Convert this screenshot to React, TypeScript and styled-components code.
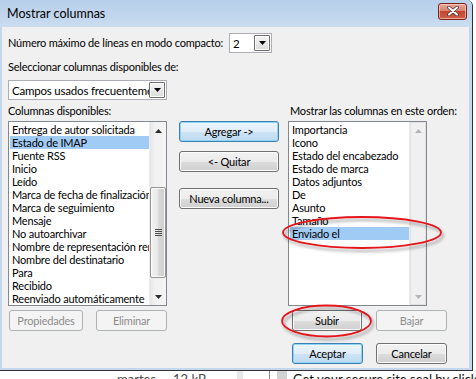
import React from 'react';
import styled, { createGlobalStyle, css } from 'styled-components';

const GlobalStyle = createGlobalStyle`
  html, body { margin: 0; padding: 0; }
  body {
    width: 476px;
    height: 379px;
    overflow: hidden;
    background: #fff;
    font-family: Lato, "Liberation Sans", sans-serif;
    font-size: 11px;
    letter-spacing: -0.2px;
    color: #000;
  }
`;

const Desktop = styled.div`
  position: relative;
  width: 476px;
  height: 379px;
  overflow: hidden;
  background: #fff;
`;

const Window = styled.div`
  width: 473px;
  height: 371px;
  box-sizing: border-box;
  display: flex;
  flex-direction: column;
  background: #c3d7ed;
  border-right: 1px solid #2f3338;
  border-bottom: 1px solid #2f3338;
  border-top-right-radius: 6px;
  padding: 0 3px 2px 2px;
`;

const TitleBar = styled.div`
  height: 27px;
  flex: none;
  margin: 0 -3px 0 -2px;
  padding: 0 5px 0 7px;
  display: flex;
  align-items: center;
  justify-content: space-between;
  background: linear-gradient(#b8d0ea, #c3d7ee 70%, #cbddf0);
  border-top-right-radius: 6px;
`;

const Title = styled.span`
  font-size: 12.5px;
  letter-spacing: 0;
  color: #000;
  margin-top: -1px;
`;

const CloseButton = styled.div`
  width: 29px;
  height: 17px;
  box-sizing: border-box;
  margin-top: -5px;
  border: 1px solid #772419;
  border-radius: 3px;
  display: flex;
  align-items: center;
  justify-content: center;
  background: linear-gradient(#e8a898 0%, #d98270 45%, #c5452f 50%, #d0604a 100%);
  box-shadow: inset 0 0 0 1px rgba(255, 220, 210, 0.6);
`;

const Client = styled.div`
  flex: 1;
  background: #f0f0f0;
  display: flex;
  flex-direction: column;
  padding: 0 21px 0 6px;
`;

const Row = styled.div<{ $top: number }>`
  display: flex;
  align-items: center;
  margin-top: ${p => p.$top}px;
`;

const Label = styled.div<{ $width?: number; $indent?: number }>`
  line-height: 14px;
  height: 14px;
  white-space: nowrap;
  ${p => p.$width && css`width: ${p.$width}px; flex: none;`}
  padding-left: ${p => p.$indent ?? 0}px;
`;

const Combo = styled.div<{ $width: number }>`
  width: ${p => p.$width}px;
  height: 20px;
  box-sizing: border-box;
  flex: none;
  border: 1px solid #acb0b6;
  background: #fff;
  display: flex;
  align-items: center;
  padding: 0 1px 0 3px;
  overflow: hidden;
`;

const ComboValue = styled.span`
  flex: 1;
  white-space: nowrap;
  overflow: hidden;
  font-size: 11.5px;
`;

const ComboArrow = styled.div`
  width: 16px;
  height: 16px;
  box-sizing: border-box;
  flex: none;
  border: 1px solid #6f6f6f;
  border-radius: 1px;
  background: linear-gradient(#f4f4f4, #dcdcdc);
  box-shadow: inset 0 0 0 1px #fbfbfb;
  display: flex;
  align-items: center;
  justify-content: center;
`;

const Columns = styled.div`
  display: grid;
  grid-template-columns: 159px 100px 160px;
  margin-top: 4px;
  & > :nth-child(2) { margin-left: 12px; }
  & > :nth-child(3) { margin-left: 21px; }
`;

const Column = styled.div`
  display: flex;
  flex-direction: column;
`;

const ButtonColumn = styled.div`
  display: flex;
  flex-direction: column;
  padding-top: 17px;
  width: 100px;
`;

const ListBox = styled.div`
  margin-top: 3px;
  height: 185px;
  box-sizing: border-box;
  border: 1px solid #828790;
  background: #fff;
  display: flex;
`;

const Items = styled.div`
  flex: 1;
  min-width: 0;
  padding: 1px 0 0 1px;
  overflow: hidden;
`;

const Item = styled.div<{ $selected?: boolean }>`
  height: 13px;
  line-height: 13px;
  padding-left: 2px;
  white-space: nowrap;
  overflow: hidden;
  background: ${p => (p.$selected ? '#a0cbf5' : 'transparent')};
`;

const ScrollBar = styled.div<{ $disabled?: boolean }>`
  width: 17px;
  flex: none;
  display: flex;
  flex-direction: column;
  box-sizing: border-box;
  border-left: 1px solid #ececec;
  background: ${p =>
    p.$disabled ? '#f0f0f0' : 'linear-gradient(to right, #e6e6e6, #f1f1f1 30%, #f4f4f4)'};
  ${p => p.$disabled && css`box-shadow: inset 0 0 0 1px #e2e2e2;`}
`;

const ScrollArrow = styled.div`
  height: 17px;
  flex: none;
  display: flex;
  align-items: center;
  justify-content: center;
`;

const Track = styled.div`
  flex: 1;
  display: flex;
  flex-direction: column;
`;

const Thumb = styled.div<{ $offset: number; $size: number }>`
  margin: ${p => p.$offset}px 0 0 0;
  height: ${p => p.$size}px;
  box-sizing: border-box;
  border: 1px solid #959595;
  border-radius: 2px;
  background: linear-gradient(to right, #f3f3f3, #e9e9e9 45%, #d9d9d9 55%, #cdcdcd);
  box-shadow: inset 0 0 0 1px #fbfbfb;
  display: flex;
  align-items: center;
  justify-content: center;
`;

const Grip = styled.div`
  width: 7px;
  height: 7px;
  background: repeating-linear-gradient(#4e4e4e 0 1px, transparent 1px 2px);
`;

type Kind = 'normal' | 'default' | 'disabled';

const Button = styled.button<{ $kind?: Kind; $width?: number }>`
  box-sizing: border-box;
  width: ${p => p.$width ?? 100}px;
  height: 21px;
  flex: none;
  margin: 0;
  padding: 0;
  font-family: inherit;
  font-size: 11px;
  letter-spacing: -0.2px;
  color: #000;
  border: 1px solid #707070;
  border-radius: 3px;
  background: linear-gradient(#f2f2f2 0%, #ebebeb 50%, #dddddd 51%, #cfcfcf 100%);
  box-shadow: inset 0 0 0 1px #fcfcfc;
  display: flex;
  align-items: center;
  justify-content: center;
  ${p =>
    p.$kind === 'default' &&
    css`
      border-color: #3c7fb1;
      background: linear-gradient(#ecf5fc 0%, #dfedf9 50%, #cde3f5 51%, #bfdaf1 100%);
      box-shadow: inset 0 0 0 1px #8fd5f7;
    `}
  ${p =>
    p.$kind === 'disabled' &&
    css`
      color: #8d8d8d;
      border-color: #adb2b5;
      background: #f4f4f4;
      box-shadow: none;
    `}
`;

const ButtonRow = styled.div<{ $top: number }>`
  display: flex;
  align-items: center;
  margin-top: ${p => p.$top}px;
  padding-right: 1px;
`;

const Group = styled.div<{ $gap: number; $push?: boolean }>`
  display: flex;
  gap: ${p => p.$gap}px;
  ${p => p.$push && css`margin-left: auto;`}
`;

const Backdrop = styled.div`
  height: 8px;
  display: flex;
  align-items: flex-start;
  overflow: hidden;
  font-family: Lato, sans-serif;
  font-size: 13px;
  letter-spacing: 0;
  line-height: 17px;
`;

const BackCell = styled.div<{ $width: number; $dark?: boolean }>`
  width: ${p => p.$width}px;
  flex: none;
  white-space: nowrap;
  color: ${p => (p.$dark ? '#111' : '#4a4a4a')};
`;

const BackBlock = styled.div<{ $width: number; $color: string }>`
  width: ${p => p.$width}px;
  height: 8px;
  flex: none;
  background: ${p => p.$color};
`;

const Overlay = styled.svg`
  position: absolute;
  left: 0;
  top: 0;
  width: 476px;
  height: 379px;
  pointer-events: none;
`;

const Down = ({ color = '#000' }: { color?: string }) => (
  <svg width="7" height="4" viewBox="0 0 7 4">
    <polygon points="0,0 7,0 3.5,4" fill={color} />
  </svg>
);

const Up = ({ color = '#000' }: { color?: string }) => (
  <svg width="7" height="4" viewBox="0 0 7 4">
    <polygon points="0,4 7,4 3.5,0" fill={color} />
  </svg>
);

const available = [
  'Entrega de autor solicitada',
  'Estado de IMAP',
  'Fuente RSS',
  'Inicio',
  'Leído',
  'Marca de fecha de finalización',
  'Marca de seguimiento',
  'Mensaje',
  'No autoarchivar',
  'Nombre de representación remitente',
  'Nombre del destinatario',
  'Para',
  'Recibido',
  'Reenviado automáticamente',
];

const shown = [
  'Importancia',
  'Icono',
  'Estado del encabezado',
  'Estado de marca',
  'Datos adjuntos',
  'De',
  'Asunto',
  'Tamaño',
  'Enviado el',
];

export default function App() {
  return (
    <Desktop>
      <GlobalStyle />
      <Window>
        <TitleBar>
          <Title>Mostrar columnas</Title>
          <CloseButton>
            <svg width="12" height="10" viewBox="0 0 12 10">
              <path d="M2 1.5 L10 8.5 M10 1.5 L2 8.5" stroke="#4a3a38" strokeWidth="3.6" strokeLinecap="round" />
              <path d="M2 1.5 L10 8.5 M10 1.5 L2 8.5" stroke="#fff" strokeWidth="2" strokeLinecap="round" />
            </svg>
          </CloseButton>
        </TitleBar>
        <Client>
          <Row $top={6}>
            <Label $width={221}>Número máximo de líneas en modo compacto:</Label>
            <Combo $width={43}>
              <ComboValue>2</ComboValue>
              <ComboArrow>
                <Down />
              </ComboArrow>
            </Combo>
          </Row>
          <Row $top={7}>
            <Label>Seleccionar columnas disponibles de:</Label>
          </Row>
          <Row $top={6}>
            <Combo $width={159}>
              <ComboValue>Campos usados frecuentemente</ComboValue>
              <ComboArrow>
                <Down />
              </ComboArrow>
            </Combo>
          </Row>
          <Columns>
            <Column>
              <Label>Columnas disponibles:</Label>
              <ListBox>
                <Items>
                  {available.map((name, i) => (
                    <Item key={name} $selected={i === 1}>
                      {name}
                    </Item>
                  ))}
                </Items>
                <ScrollBar>
                  <ScrollArrow>
                    <Up color="#2b2b2b" />
                  </ScrollArrow>
                  <Track>
                    <Thumb $offset={48} $size={91}>
                      <Grip />
                    </Thumb>
                  </Track>
                  <ScrollArrow>
                    <Down color="#2b2b2b" />
                  </ScrollArrow>
                </ScrollBar>
              </ListBox>
            </Column>
            <ButtonColumn>
              <Button $kind="default">Agregar -&gt;</Button>
              <Button style={{ marginTop: 9 }}>&lt;- Quitar</Button>
              <Button style={{ marginTop: 16 }}>Nueva columna...</Button>
            </ButtonColumn>
            <Column>
              <Label $indent={2}>Mostrar las columnas en este orden:</Label>
              <ListBox>
                <Items>
                  {shown.map((name, i) => (
                    <Item key={name} $selected={i === shown.length - 1}>
                      {name}
                    </Item>
                  ))}
                </Items>
                <ScrollBar $disabled>
                  <ScrollArrow>
                    <Up color="#b4b4b4" />
                  </ScrollArrow>
                  <Track />
                  <ScrollArrow>
                    <Down color="#b4b4b4" />
                  </ScrollArrow>
                </ScrollBar>
              </ListBox>
            </Column>
          </Columns>
          <ButtonRow $top={4}>
            <Group $gap={13} style={{ marginLeft: 1 }}>
              <Button $kind="disabled" $width={74}>Propiedades</Button>
              <Button $kind="disabled" $width={71}>Eliminar</Button>
            </Group>
            <Group $gap={14} $push>
              <Button $width={70}>Subir</Button>
              <Button $kind="disabled" $width={71}>Bajar</Button>
            </Group>
          </ButtonRow>
          <ButtonRow $top={12}>
            <Group $gap={13} $push>
              <Button $kind="default" $width={71}>Aceptar</Button>
              <Button $width={71}>Cancelar</Button>
            </Group>
          </ButtonRow>
        </Client>
      </Window>
      <Backdrop>
        <BackCell $width={117} />
        <BackCell $width={56}>martes</BackCell>
        <BackCell $width={64}>12 kB</BackCell>
        <BackBlock $width={6} $color="#e8e8e8" />
        <BackCell $width={26} />
        <BackBlock $width={1} $color="#8a8a8a" />
        <BackCell $width={7} />
        <BackBlock $width={10} $color="#d2d2d2" />
        <BackCell $width={6} />
        <BackCell $width={200} $dark>Get your secure site seal by clicking</BackCell>
      </Backdrop>
      <Overlay viewBox="0 0 476 379">
        <defs>
          <filter id="shadow" x="-20%" y="-50%" width="140%" height="200%">
            <feDropShadow dx="2" dy="3" stdDeviation="1.6" floodColor="#000" floodOpacity="0.35" />
          </filter>
        </defs>
        <ellipse cx="362" cy="232.5" rx="79" ry="15.5" fill="none" stroke="#e3151b" strokeWidth="1.8" filter="url(#shadow)" />
        <ellipse cx="326.5" cy="321" rx="44.5" ry="15.5" fill="none" stroke="#e3151b" strokeWidth="1.8" filter="url(#shadow)" />
      </Overlay>
    </Desktop>
  );
}
